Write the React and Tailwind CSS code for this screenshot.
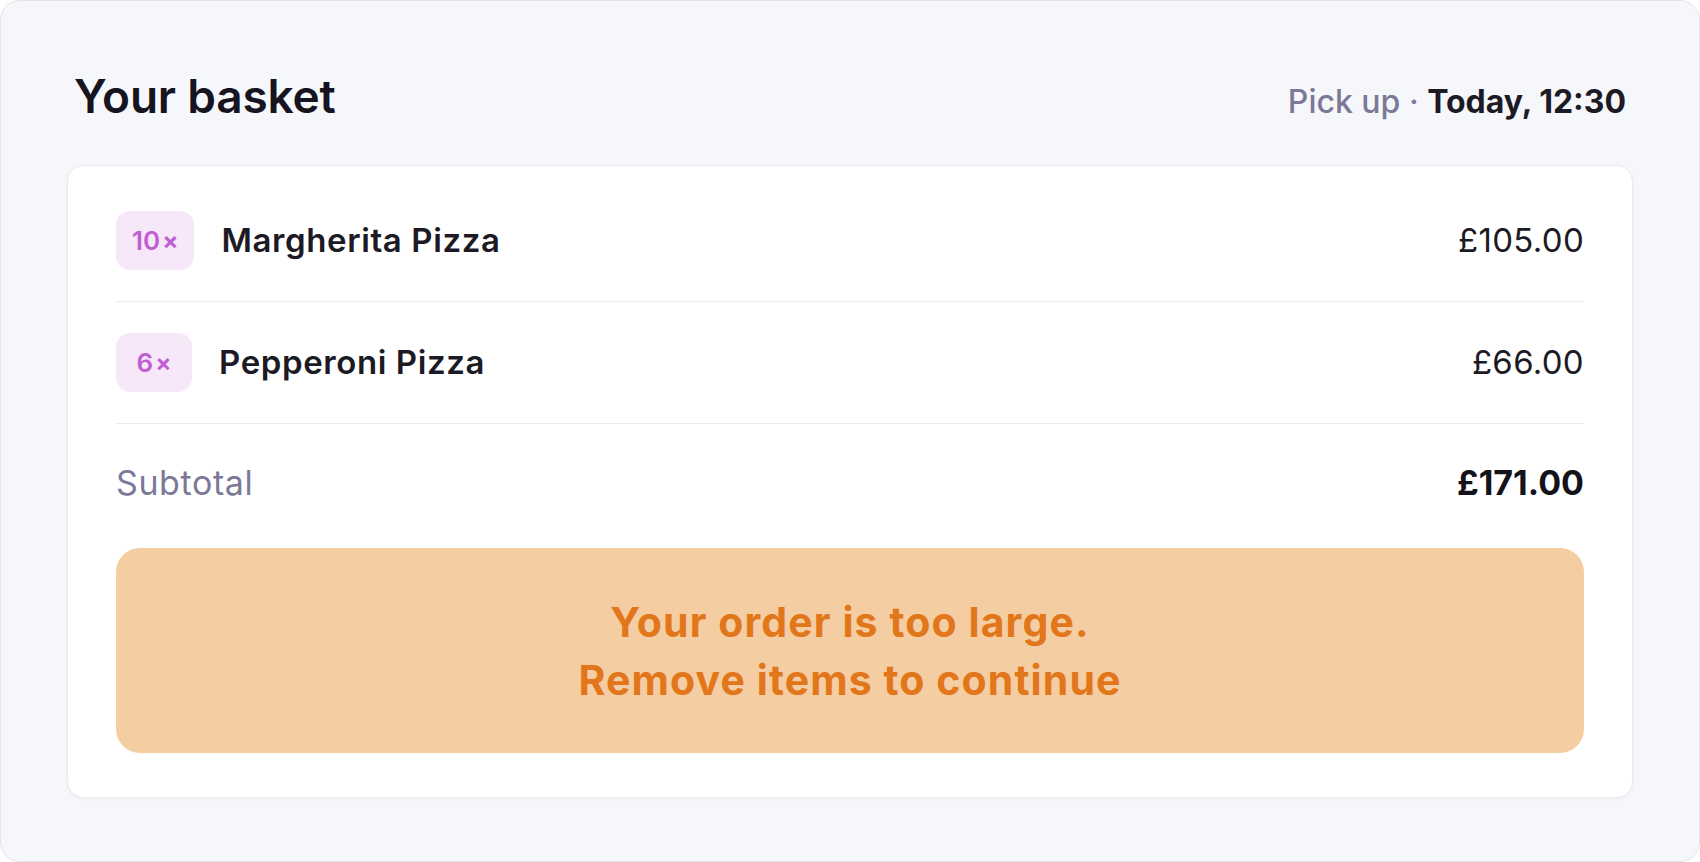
export default function App() {
  const items = [
    { qty: "10", name: "Margherita Pizza", price: "£105.00" },
    { qty: "6", name: "Pepperoni Pizza", price: "£66.00" },
  ];
  return (
    <div className="w-[1700px] h-[862px] bg-white font-['Inter',sans-serif]">
      <div className="w-[1700px] h-[862px] rounded-[20px] border border-[#e3e4ea] bg-[#f6f7fb] px-[66px] pt-[67px]">
        <div className="flex items-baseline justify-between px-[7px] h-[56px]">
          <h1 className="text-[46px] leading-[56px] font-semibold text-[#16141f] tracking-[-0.2px]">Your basket</h1>
          <div className="text-[32px] leading-[40px]">
            <span className="font-medium text-[#7b7997]">Pick up · </span>
            <span className="font-bold text-[#1c1a24]">Today, 12:30</span>
          </div>
        </div>
        <div className="mt-[41px] rounded-[16px] border border-[#e9e9ef] bg-white px-[48px] pt-[14px] pb-[44px] shadow-[0_1px_3px_rgba(20,20,40,0.04)]">
          {items.map((it) => (
            <div key={it.name} className="flex items-center justify-between py-[31px] border-b border-[#ececf1]">
              <div className="flex items-center gap-[27px]">
                <div className="flex h-[59px] min-w-[76px] items-center justify-center rounded-[14px] bg-[#f7e8f9] px-[16px] text-[26px] font-semibold text-[#c05ed2]">
                  {it.qty}
                  <span className="ml-[2px] text-[24px] font-bold">×</span>
                </div>
                <span className="text-[33px] font-semibold tracking-[0.6px] text-[#1c1a24]">{it.name}</span>
              </div>
              <span className="text-[33px] font-normal tracking-[0.3px] text-[#1c1a24]">{it.price}</span>
            </div>
          ))}
          <div className="flex items-center justify-between pt-[35px] leading-[48px]">
            <span className="text-[34px] tracking-[0.6px] text-[#7b7997]">Subtotal</span>
            <span className="text-[34px] font-bold text-[#14131a]">£171.00</span>
          </div>
          <div className="mt-[41px] flex h-[205px] flex-col items-center justify-center rounded-[24px] bg-[#f4cda3] text-[41px] leading-[58px] font-bold tracking-[1.1px] text-[#e2761a]">
            <span>Your order is too large.</span>
            <span>Remove items to continue</span>
          </div>
        </div>
      </div>
    </div>
  );
}
